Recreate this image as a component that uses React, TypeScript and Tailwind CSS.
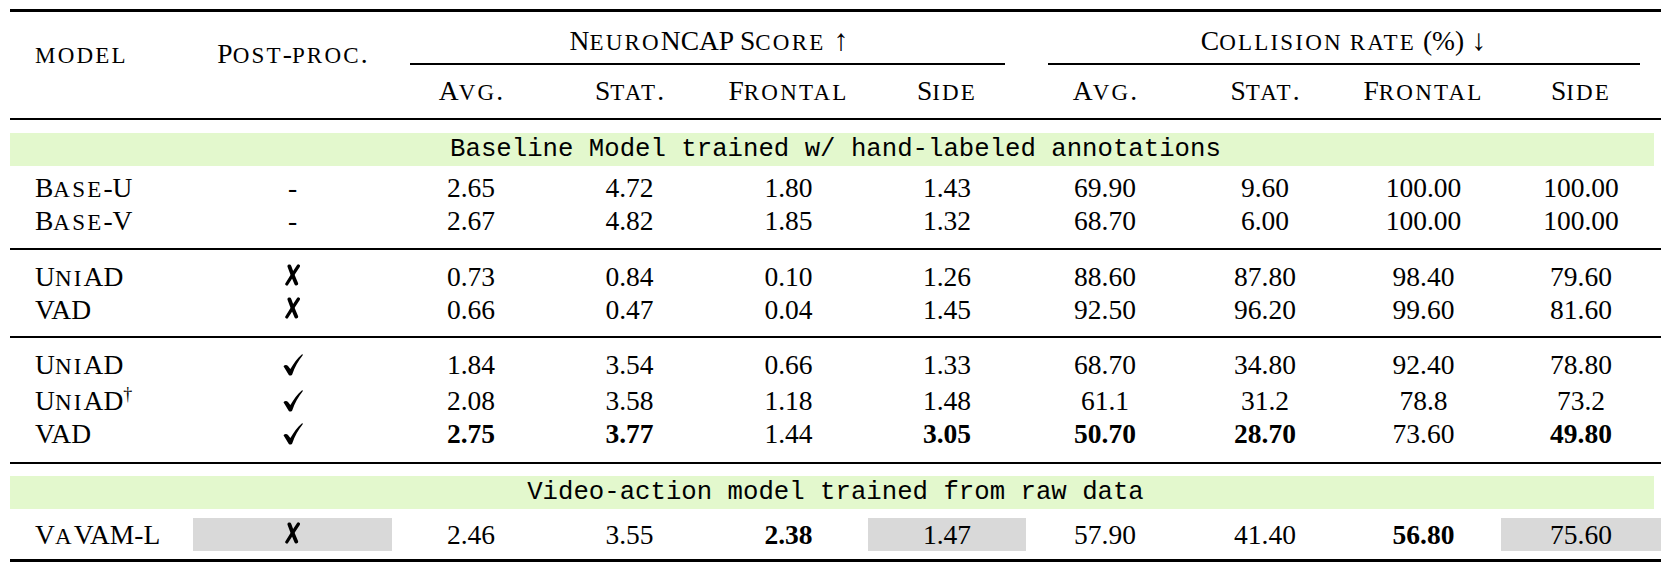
import React from 'react';

type Cell = { v: string; bold?: boolean; shade?: boolean };

const COLS = 'grid grid-cols-[183px_199px_158px_159px_159px_158px_158px_162px_155px_160px]';

// LaTeX \textsc look: lowercase letters turn into smaller capitals
const SC = ({ text }: { text: string }) => {
  const parts = text.match(/[a-z]+|[^a-z]+/g) ?? [];
  return (
    <>
      {parts.map((p, i) =>
        /[a-z]/.test(p) ? (
          <span key={i} className="text-[23px] tracking-[2.2px] leading-none">
            {p.toUpperCase()}
          </span>
        ) : (
          <span key={i}>{p}</span>
        )
      )}
    </>
  );
};

// pifont ding51 / ding55
const Check = () => (
  <svg width="20" height="22" viewBox="0 0 20 22" className="block">
    <path
      d="M0.5 12.2 C1.8 10.6 3.8 10.6 5 12 L7.4 15 C10.6 9.2 14.4 4 18.8 0.4 C19.4 0 20 0.6 19.7 1.2 C15.4 6.6 11.8 12.6 9.2 20.4 C8.8 21.6 6.8 22 5.8 20.9 Z"
      fill="#000"
    />
  </svg>
);

const Cross = () => (
  <svg width="15" height="22" viewBox="0 0 15 22" className="block mb-[3px]">
    <path d="M4.4 2.4 Q7.2 10.5 11.2 19.6" stroke="#000" strokeWidth="3.8" strokeLinecap="round" fill="none" />
    <path d="M13.4 2 Q8 10 1.8 20" stroke="#000" strokeWidth="3.2" strokeLinecap="round" fill="none" />
  </svg>
);

const c = (v: string, bold = false, shade = false): Cell => ({ v, bold, shade });
const n = (...vals: string[]) => vals.map((v) => c(v));

const Row = ({ name, dagger, cells }: { name: string; dagger?: boolean; cells: Cell[] }) => (
  <div className={`${COLS} h-[33px] leading-[33px]`}>
    <div className="pl-[25px] whitespace-nowrap">
      <SC text={name} />
      {dagger && <span className="text-[18px] align-super leading-none">†</span>}
    </div>
    {cells.map((cell, i) => (
      <div
        key={i}
        className={`flex items-center justify-center whitespace-nowrap ${cell.bold ? 'font-bold' : ''} ${cell.shade ? 'bg-[#d9d9d9]' : ''}`}
      >
        {cell.v === '✓' ? <Check /> : cell.v === '✗' ? <Cross /> : cell.v}
      </div>
    ))}
  </div>
);

const Band = ({ text }: { text: string }) => (
  <div className="mr-[7px] h-[33px] bg-[#e3f8cd] pl-[7px] text-center font-['Liberation_Mono',monospace] text-[25.7px] leading-[33px] whitespace-pre">
    {text}
  </div>
);

const Rule = ({ heavy }: { heavy?: boolean }) => (
  <div className={heavy ? 'h-[3px] bg-black' : 'h-[2px] bg-black'} />
);

const subHeads = ['Avg.', 'Stat.', 'Frontal', 'Side', 'Avg.', 'Stat.', 'Frontal', 'Side'];

export default function App() {
  return (
    <div className="w-[1672px] h-[574px] bg-white pt-[9px] pl-[10px] font-['Liberation_Serif',serif] text-[27.5px] text-black">
      <div className="w-[1651px]">
        <Rule heavy />

        {/* header, two levels */}
        <div className={`${COLS} grid-rows-[51px_2px_53px] leading-[32px]`}>
          <div className="row-span-3 pl-[25px] pt-[26px]">
            <SC text="model" />
          </div>
          <div className="row-span-3 pt-[26px] text-center">
            <SC text="Post-proc." />
          </div>
          <div className="col-span-4 pt-[12px] text-center whitespace-nowrap">
            <SC text="NeuroNCAP Score" />
            <span className="ml-[8px] text-[30px]">↑</span>
          </div>
          <div className="col-span-4 pt-[12px] text-center whitespace-nowrap">
            <SC text="Collision rate" /> (%)
            <span className="ml-[7px] text-[30px]">↓</span>
          </div>
          <div className="col-span-4 ml-[18px] mr-[21px] bg-black" />
          <div className="col-span-4 ml-[22px] mr-[21px] bg-black" />
          {subHeads.map((h, i) => (
            <div key={i} className="pt-[10px] text-center whitespace-nowrap">
              <SC text={h} />
            </div>
          ))}
        </div>
        <Rule />

        <div className="h-[13px]" />
        <Band text="Baseline Model trained w/ hand-labeled annotations" />
        <div className="h-[5px]" />
        <Row name="Base-U" cells={[c('-'), ...n('2.65', '4.72', '1.80', '1.43', '69.90', '9.60', '100.00', '100.00')]} />
        <Row name="Base-V" cells={[c('-'), ...n('2.67', '4.82', '1.85', '1.32', '68.70', '6.00', '100.00', '100.00')]} />
        <div className="h-[11px]" />
        <Rule />

        <div className="h-[10px]" />
        <Row name="UniAD" cells={[c('✗'), ...n('0.73', '0.84', '0.10', '1.26', '88.60', '87.80', '98.40', '79.60')]} />
        <Row name="VAD" cells={[c('✗'), ...n('0.66', '0.47', '0.04', '1.45', '92.50', '96.20', '99.60', '81.60')]} />
        <div className="h-[10px]" />
        <Rule />

        <div className="h-[10px]" />
        <Row name="UniAD" cells={[c('✓'), ...n('1.84', '3.54', '0.66', '1.33', '68.70', '34.80', '92.40', '78.80')]} />
        <div className="h-[3px]" />
        <Row name="UniAD" dagger cells={[c('✓'), ...n('2.08', '3.58', '1.18', '1.48', '61.1', '31.2', '78.8', '73.2')]} />
        <Row
          name="VAD"
          cells={[
            c('✓'),
            c('2.75', true),
            c('3.77', true),
            c('1.44'),
            c('3.05', true),
            c('50.70', true),
            c('28.70', true),
            c('73.60'),
            c('49.80', true),
          ]}
        />
        <div className="h-[12px]" />
        <Rule />

        <div className="h-[12px]" />
        <Band text="Video-action model trained from raw data" />
        <div className="h-[9px]" />
        <Row
          name="VaVAM-L"
          cells={[
            c('✗', false, true),
            c('2.46'),
            c('3.55'),
            c('2.38', true),
            c('1.47', false, true),
            c('57.90'),
            c('41.40'),
            c('56.80', true),
            c('75.60', false, true),
          ]}
        />
        <div className="h-[8px]" />
        <Rule heavy />
      </div>
    </div>
  );
}
